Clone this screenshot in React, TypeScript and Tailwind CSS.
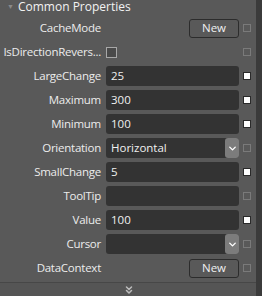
import { ChevronDown, ChevronsDown } from 'lucide-react';

type Row = {
  label: string;
  kind: 'button' | 'check' | 'text' | 'select';
  value?: string;
  set: boolean;
};

const rows: Row[] = [
  { label: 'CacheMode', kind: 'button', set: false },
  { label: 'IsDirectionRevers...', kind: 'check', set: false },
  { label: 'LargeChange', kind: 'text', value: '25', set: true },
  { label: 'Maximum', kind: 'text', value: '300', set: true },
  { label: 'Minimum', kind: 'text', value: '100', set: true },
  { label: 'Orientation', kind: 'select', value: 'Horizontal', set: false },
  { label: 'SmallChange', kind: 'text', value: '5', set: true },
  { label: 'ToolTip', kind: 'text', value: '', set: false },
  { label: 'Value', kind: 'text', value: '100', set: true },
  { label: 'Cursor', kind: 'select', value: '', set: false },
  { label: 'DataContext', kind: 'button', set: false },
];

function Editor({ row }: { row: Row }) {
  if (row.kind === 'button') {
    return (
      <div className="flex justify-end">
        <button className="w-[50px] h-[19px] rounded-[3px] border border-[#2c2c2c] text-[11.5px] leading-none text-[#f0f0f0]">
          New
        </button>
      </div>
    );
  }
  if (row.kind === 'check') {
    return <div className="w-[11px] h-[11px] border border-[#a8a8a8] bg-[#4a4a4a]" />;
  }
  if (row.kind === 'select') {
    return (
      <div className="flex h-[20px] items-center rounded-[3px] bg-[#333333]">
        <span className="flex-1 pl-[5px] text-[11.5px] text-[#f0f0f0]">{row.value}</span>
        <div className="flex h-full w-[14px] items-center justify-center rounded-[3px] bg-[#7c7c7c]">
          <ChevronDown size={11} strokeWidth={3} className="text-white" />
        </div>
      </div>
    );
  }
  return (
    <div className="flex h-[20px] items-center rounded-[3px] bg-[#333333] pl-[5px] text-[11.5px] text-[#f0f0f0]">
      {row.value}
    </div>
  );
}

export default function App() {
  return (
    <div
      className="flex h-[296px] w-[262px] bg-[#595959] text-[#ececec]"
      style={{ fontFamily: '"Open Sans", "Noto Sans", sans-serif' }}
    >
      <div className="flex flex-1 flex-col">
        {/* Header */}
        <div className="flex h-[16px] items-start">
          <span className="ml-[7px] mt-[3px] text-[7px] leading-[7px] text-[#8a8a8a]">▼</span>
          <span className="ml-[4px] text-[12px] leading-[14px] text-[#f2f2f2]">Common Properties</span>
        </div>

        {/* Property rows */}
        <div className="flex flex-col">
          {rows.map((row) => (
            <div key={row.label} className="flex h-[24px] items-center">
              <div className="w-[101px] whitespace-nowrap text-right text-[11.5px] tracking-[-0.25px]">
                {row.label}
              </div>
              <div className="ml-[5px] w-[133px]">
                <Editor row={row} />
              </div>
              <div
                className={
                  row.set
                    ? 'ml-[4px] h-[8px] w-[8px] border border-[#2a2a2a] bg-white'
                    : 'ml-[4px] h-[8px] w-[8px] border border-[#7a7a7a]'
                }
              />
            </div>
          ))}
        </div>

        {/* Footer */}
        <div className="mt-auto flex h-[14px] items-center justify-center border-t border-[#474747] bg-[#555555] pl-[2px]">
          <ChevronsDown size={12} strokeWidth={3} className="text-[#bdbdbd]" />
        </div>
      </div>

      {/* Scroll strip */}
      <div className="w-[6px] bg-[#3b3b3b]" />
    </div>
  );
}
